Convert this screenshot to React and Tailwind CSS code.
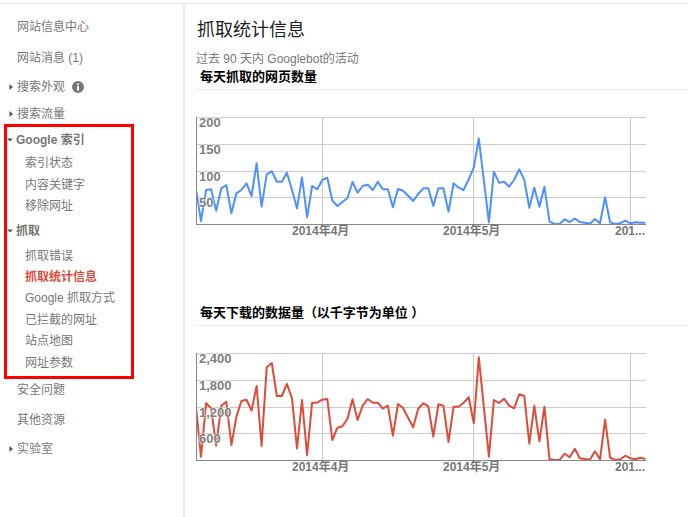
const FONT = "font-['Liberation_Sans','Noto_Sans_CJK_SC',sans-serif]";

const crawlData = [
  72.3, 104, 73, 72.3, 93.7, 71.3, 68, 96.3, 76.3, 73, 66.3, 79, 46.3, 89.7, 57.3, 54.3, 64.7, 64.7, 55.7, 73,
  91.3, 60.3, 100.3, 69, 72.3, 63, 60.7, 83.7, 89, 85, 81, 65, 75.7, 69, 67.7, 73, 64.7, 72.3, 72.3, 90.3,
  72, 73.7, 78.7, 84, 77, 71.3, 71.3, 89, 71.3, 71.3, 94.7, 66.3, 70.7, 73, 62.3, 50.3, 21.3, 63, 105.3, 54.7,
  65.7, 64.7, 69.7, 63, 52.3, 63, 90.7, 70.7, 89.7, 69.7, 104.7, 107, 107, 102.3, 105, 101.7, 105, 105.7, 106.7, 102,
  106.3, 80.3, 105.3, 107, 106.3, 103.7, 106.3, 105.3, 105.7, 105.7,
];

const downloadData = [
  54.7, 103.7, 50.3, 55.3, 92.7, 52.7, 48.7, 92, 63.7, 48, 46.7, 57.7, 33, 93, 14.3, 10, 43, 43, 31, 45.3,
  95.3, 47, 102, 49.7, 49.7, 46.7, 46, 87, 74.7, 73.3, 65.7, 46.3, 67, 52.7, 46, 49.7, 49.7, 55.7, 52.7, 82.7,
  51, 55, 64.7, 74.3, 55.7, 50.3, 53.3, 83.7, 51.3, 52.7, 89, 53.7, 53.7, 49.7, 44.3, 70.3, 4.3, 53.7, 103.7, 47,
  50, 45.7, 52.7, 55.3, 41.3, 43, 90.7, 52.7, 88.3, 53.7, 106.3, 107, 107, 100.7, 104.3, 95.7, 105.3, 106, 106.7, 98.3,
  106.3, 66.7, 104.7, 107, 106.3, 102.7, 105.3, 106.3, 104.7, 106,
];

const Arrow = ({ open }) => (
  <svg width="6" height="7" viewBox="0 0 6 7" className="absolute left-[1px] top-1/2 -translate-y-1/2">
    <path d={open ? 'M0 2h6L3 5z' : 'M1.5 0.5l3.5 3-3.5 3z'} fill="#555" />
  </svg>
);

const NavRow = ({ label, h, arrow, open, bold, sub, active, children }) => (
  <div
    style={{ height: h }}
    className={`relative flex items-center whitespace-nowrap text-[12px] ${sub ? 'pl-[19px]' : 'pl-[10px]'} ${bold ? 'font-bold' : ''} ${active ? 'text-[#dd4b39]' : 'text-[#777]'}`}
  >
    {arrow && <Arrow open={open} />}
    {label}
    {children}
  </div>
);

const AxisLabel = ({ left, children }) => (
  <span style={{ left }} className="absolute top-[107px] text-[12px] leading-[15px] font-bold whitespace-nowrap text-[#777]">
    {children}
  </span>
);

const Chart = ({ data, color, yLabels, className }) => {
  const points = data.map((y, i) => `${(i * 5.05).toFixed(1)},${y}`).join(' ');
  return (
    <div className={`relative h-[108px] w-[450px] ${className}`}>
      <svg width="450" height="108" className="block">
        {[0, 27, 54, 80].map((y) => (
          <line key={y} x1="0" x2="450" y1={y + 0.5} y2={y + 0.5} stroke="#ccc" />
        ))}
        {[126, 277, 434].map((x) => (
          <line key={x} x1={x + 0.5} x2={x + 0.5} y1="0" y2="107" stroke="#ccc" />
        ))}
        <polyline points={points} fill="none" stroke={color} strokeWidth="2" strokeLinejoin="round" />
        <line x1="0.5" x2="0.5" y1="0" y2="107" stroke="#888" />
        <line x1="0" x2="450" y1="107.5" y2="107.5" stroke="#888" />
      </svg>
      {yLabels.map(([text, top]) => (
        <span
          key={text}
          style={{ top }}
          className="absolute left-[3px] text-[13px] leading-[15px] font-bold text-[#808080] [text-shadow:0_0_2px_white,0_0_2px_white]"
        >
          {text}
        </span>
      ))}
      <AxisLabel left={96}>2014年4月</AxisLabel>
      <AxisLabel left={247}>2014年5月</AxisLabel>
      <AxisLabel left={419}>201...</AxisLabel>
    </div>
  );
};

const ChartTitle = ({ children, className }) => (
  <div className={`border-b border-[#ebebeb] pl-[4px] text-[13px] leading-[20px] font-bold text-black ${className}`}>{children}</div>
);

export default function App() {
  return (
    <div className={`${FONT} h-[517px] w-[688px] overflow-hidden bg-white`}>
      <div className="mt-[3px] h-px bg-[#e5e5e5]" />
      <div className="flex h-[513px]">
        <aside className="w-[185px] shrink-0 border-r-2 border-[#ebebeb] pt-[8px] pl-[7px]">
          <NavRow label="网站信息中心" h={30} />
          <NavRow label="网站消息 (1)" h={31} />
          <NavRow label="搜索外观" h={28} arrow>
            <svg width="12" height="12" viewBox="0 0 12 12" className="ml-[7px]">
              <circle cx="6" cy="6" r="6" fill="#777" />
              <rect x="5" y="5" width="2" height="4.5" fill="#fff" />
              <rect x="5" y="2.5" width="2" height="1.6" fill="#fff" />
            </svg>
          </NavRow>
          <NavRow label="搜索流量" h={26} arrow />
          <div className="-ml-[3px] mt-[-3px] w-[130px] border-[3px] border-[#ff0000] pb-[3px]">
            <div className="-ml-[1px]">
              <NavRow label="Google 索引" h={25} arrow open bold />
              <NavRow label="索引状态" h={22} sub />
              <NavRow label="内容关键字" h={21} sub />
              <NavRow label="移除网址" h={22} sub />
              <NavRow label="抓取" h={28} arrow open bold />
              <NavRow label="抓取错误" h={21} sub />
              <NavRow label="抓取统计信息" h={21} sub bold active />
              <NavRow label="Google 抓取方式" h={22} sub />
              <NavRow label="已拦截的网址" h={21} sub />
              <NavRow label="站点地图" h={22} sub />
              <NavRow label="网址参数" h={21} sub />
            </div>
          </div>
          <NavRow label="安全问题" h={22} />
          <NavRow label="其他资源" h={38} />
          <NavRow label="实验室" h={20} arrow />
        </aside>
        <main className="min-w-0 flex-1 pl-[11px]">
          <h1 className="mt-[13px] pl-[1px] text-[18px] leading-[26px] font-normal text-[#222]">抓取统计信息</h1>
          <p className="mt-[8px] text-[12px] leading-[16px] text-[#777]">过去 90 天内 Googlebot的活动</p>
          <ChartTitle className="h-[23px]">每天抓取的网页数量</ChartTitle>
          <Chart
            data={crawlData}
            color="#4d90fe"
            className="mt-[27px]"
            yLabels={[['200', -2], ['150', 25], ['100', 52], ['50', 78]]}
          />
          <ChartTitle className="mt-[78px] h-[23px]">
            每天下载的数据量<span className="tracking-[-4px]">（</span> 以千字节为单位 ）
          </ChartTitle>
          <Chart
            data={downloadData}
            color="#dd4b39"
            className="mt-[27px]"
            yLabels={[['2,400', -2], ['1,800', 25], ['1,200', 52], ['600', 78]]}
          />
        </main>
      </div>
    </div>
  );
}
